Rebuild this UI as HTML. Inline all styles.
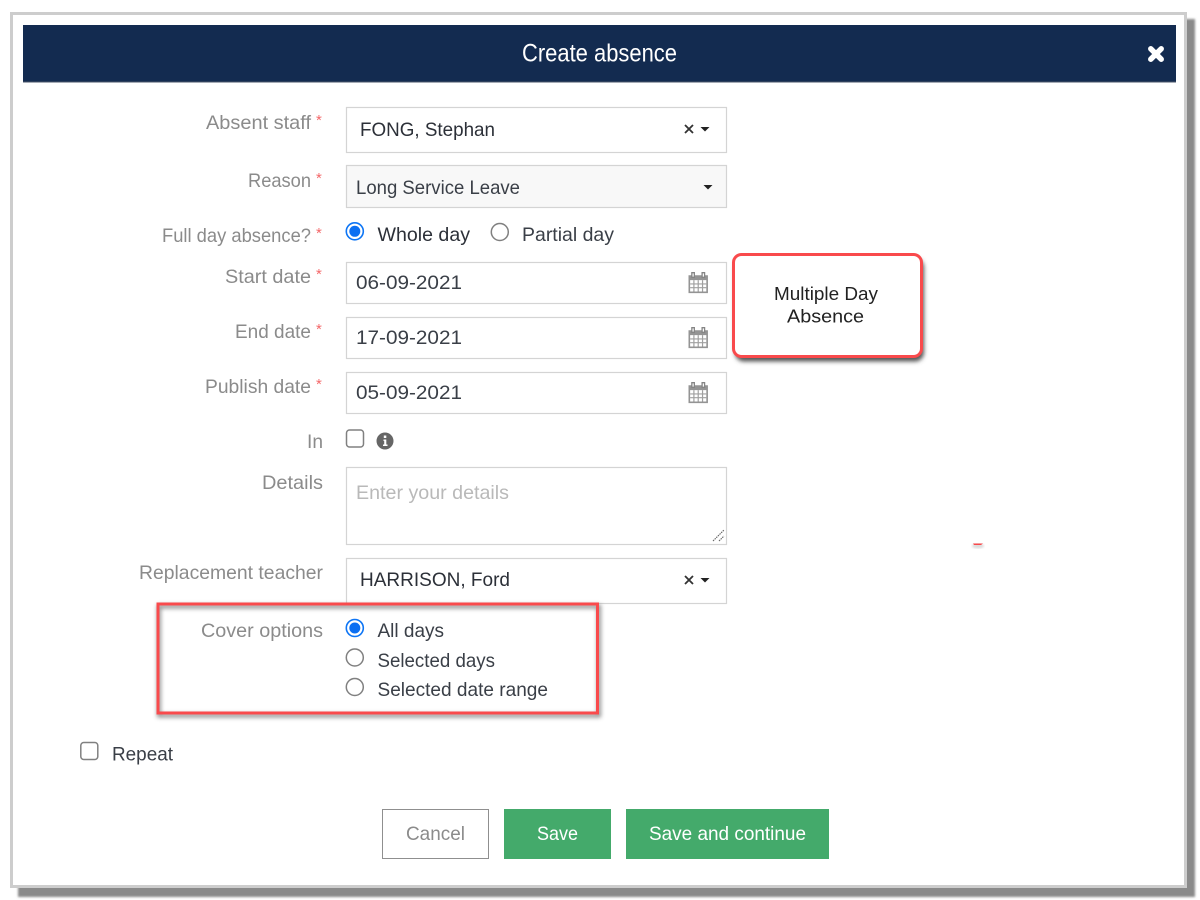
<!DOCTYPE html>
<html lang="en">
<head>
<meta charset="utf-8">
<title>Create absence</title>
<style>
html,body{margin:0;padding:0;background:#fff;width:1200px;height:900px;overflow:hidden}
svg{display:block;position:absolute;left:0;top:0}
text{font-family:"Liberation Sans",sans-serif;font-size:19.5px}
.l{fill:#8b8b8b}
.v{fill:#3a3f47}
.s{fill:#f4686a;font-size:15px}
.box{fill:#fff;stroke:#d4d4d4;stroke-width:1.2}
.rd{fill:#fff;stroke:#808080;stroke-width:1.5}
.cb{fill:#fff;stroke:#808080;stroke-width:1.5}
</style>
</head>
<body>
<svg width="1200" height="900" viewBox="0 0 1200 900" xmlns="http://www.w3.org/2000/svg">
<defs>
<filter id="b1" x="-5%" y="-5%" width="110%" height="110%"><feGaussianBlur stdDeviation="1"/></filter>
<filter id="b2" x="-20%" y="-20%" width="140%" height="140%"><feGaussianBlur stdDeviation="2"/></filter>
<g id="cal" transform="scale(1.08)">
<path d="M0 3.500h18v16.500h-18z" fill="#949494"/>
<path d="M1.500 8h15v10.500h-15z" fill="#fff"/>
<path d="M5 8v10.500M9 8v10.500M13 8v10.500M1.500 11.500h15M1.500 15h15" stroke="#a0a0a0" stroke-width="1.100" fill="none"/>
<path d="M2.500 .5h3.500v5.500h-3.500zM12 .5h3.500v5.500h-3.500z" fill="#858585"/>
<path d="M3.700 1.700h1.100v3h-1.100zM13.200 1.700h1.100v3h-1.100z" fill="#fff"/>
</g>
<path id="car" d="M0 0h9l-4.500 4.500z" fill="#222"/>
</defs>

<!-- frame -->
<rect x="18" y="19" width="1177" height="878" fill="#8a8a8a" filter="url(#b1)"/>
<rect x="11.500" y="13.500" width="1174" height="873" fill="#fff" stroke="#cdcdcd" stroke-width="3"/>

<!-- header -->
<rect x="23" y="25" width="1153" height="57" fill="#132b50"/>
<rect x="23" y="81.500" width="1153" height="1" fill="#4a5568"/>
<text x="522" y="61.500" textLength="155" lengthAdjust="spacingAndGlyphs" style="font-size:25px" fill="#fff">Create absence</text>
<path d="M1150.800 48.800L1161.200 59.200M1161.200 48.800L1150.800 59.200" stroke="#fff" stroke-width="5.500" stroke-linecap="round"/>

<!-- labels -->
<text class="l" x="206" y="129" textLength="105" lengthAdjust="spacingAndGlyphs">Absent staff</text><text class="s" x="316" y="125">*</text>
<text class="l" x="248" y="187" textLength="63" lengthAdjust="spacingAndGlyphs">Reason</text><text class="s" x="316" y="183">*</text>
<text class="l" x="162" y="242" textLength="149" lengthAdjust="spacingAndGlyphs">Full day absence?</text><text class="s" x="316" y="238">*</text>
<text class="l" x="225" y="283" textLength="86" lengthAdjust="spacingAndGlyphs">Start date</text><text class="s" x="316" y="279">*</text>
<text class="l" x="235" y="338" textLength="76" lengthAdjust="spacingAndGlyphs">End date</text><text class="s" x="316" y="334">*</text>
<text class="l" x="205" y="393" textLength="106" lengthAdjust="spacingAndGlyphs">Publish date</text><text class="s" x="316" y="389">*</text>
<text class="l" x="307" y="448" textLength="16" lengthAdjust="spacingAndGlyphs">In</text>
<text class="l" x="262" y="489" textLength="61" lengthAdjust="spacingAndGlyphs">Details</text>
<text class="l" x="139" y="579" textLength="184" lengthAdjust="spacingAndGlyphs">Replacement teacher</text>
<text class="l" x="201" y="637" textLength="122" lengthAdjust="spacingAndGlyphs">Cover options</text>

<!-- fields -->
<rect class="box" x="346.500" y="107.500" width="380" height="45"/>
<text x="360" y="136" textLength="135" lengthAdjust="spacingAndGlyphs" fill="#2c3038">FONG, Stephan</text>
<path d="M685 125L693 133M693 125L685 133" stroke="#333" stroke-width="1.800"/>
<use href="#car" x="700.500" y="127"/>

<rect class="box" x="346.500" y="165.500" width="380" height="42" style="fill:#f8f8f8"/>
<text class="v" x="356" y="194" textLength="164" lengthAdjust="spacingAndGlyphs">Long Service Leave</text>
<use href="#car" x="703.500" y="185"/>

<circle cx="354.800" cy="231.300" r="8.500" fill="#fff" stroke="#0d75f5" stroke-width="1.600"/>
<circle cx="354.800" cy="231.300" r="5.500" fill="#0b6ff2"/>
<text x="377.500" y="241" textLength="92.500" lengthAdjust="spacingAndGlyphs" fill="#2c3038">Whole day</text>
<circle class="rd" cx="499.800" cy="232" r="8.500"/>
<text class="v" x="522" y="241" textLength="92" lengthAdjust="spacingAndGlyphs">Partial day</text>

<rect class="box" x="346.500" y="262.500" width="380" height="41"/>
<text class="v" x="356" y="289" textLength="106" lengthAdjust="spacingAndGlyphs">06-09-2021</text>
<g transform="translate(688.500 271.500)"><use href="#cal"/></g>
<rect class="box" x="346.500" y="317.500" width="380" height="41"/>
<text class="v" x="356" y="344" textLength="106" lengthAdjust="spacingAndGlyphs">17-09-2021</text>
<g transform="translate(688.500 326.500)"><use href="#cal"/></g>
<rect class="box" x="346.500" y="372.500" width="380" height="41"/>
<text class="v" x="356" y="399" textLength="106" lengthAdjust="spacingAndGlyphs">05-09-2021</text>
<g transform="translate(688.500 381.500)"><use href="#cal"/></g>

<rect class="cb" x="346.500" y="430" width="17" height="17" rx="3"/>
<circle cx="385" cy="441" r="8.500" fill="#666"/>
<path d="M383.500 439.500h2.800v5h1.200v1.500h-4.500v-1.500h1.200v-3.500h-.7zM383.800 435.500h2.500v2.500h-2.500z" fill="#fff"/>

<rect class="box" x="346.500" y="467.500" width="380" height="77"/>
<text x="356" y="499" textLength="153" lengthAdjust="spacingAndGlyphs" fill="#b9b9b9">Enter your details</text>
<path d="M713 541L724 530M719 541L724 536" stroke="#666" stroke-width="1.100" stroke-dasharray="1.500 .8"/>

<rect class="box" x="346.500" y="558.500" width="380" height="45"/>
<text x="360" y="586" textLength="150" lengthAdjust="spacingAndGlyphs" fill="#2c3038">HARRISON, Ford</text>
<path d="M685 576L693 584M693 576L685 584" stroke="#333" stroke-width="1.800"/>
<use href="#car" x="700.500" y="578"/>

<!-- cover options -->
<circle cx="354.800" cy="628" r="8.500" fill="#fff" stroke="#0d75f5" stroke-width="1.600"/>
<circle cx="354.800" cy="628" r="5.500" fill="#0b6ff2"/>
<text class="v" x="377.500" y="637" textLength="66.500" lengthAdjust="spacingAndGlyphs">All days</text>
<circle class="rd" cx="354.800" cy="657.500" r="8.500"/>
<text class="v" x="377.500" y="667" textLength="117.500" lengthAdjust="spacingAndGlyphs">Selected days</text>
<circle class="rd" cx="354.800" cy="687" r="8.500"/>
<text class="v" x="377.500" y="696" textLength="170.500" lengthAdjust="spacingAndGlyphs">Selected date range</text>

<rect x="159" y="606.500" width="440" height="109" fill="none" stroke="#777" stroke-width="4" opacity=".8" filter="url(#b2)"/>
<rect x="158" y="604" width="439.500" height="109" fill="none" stroke="#f94a4c" stroke-width="3"/>

<!-- callout -->
<rect x="735" y="258.500" width="189" height="103" rx="9" fill="#555" filter="url(#b2)"/>
<rect x="733.500" y="254.500" width="188" height="102" rx="8" fill="#fff" stroke="#f94a4c" stroke-width="3"/>
<text x="774" y="300" textLength="104" lengthAdjust="spacingAndGlyphs" fill="#222" style="font-size:18px">Multiple Day</text>
<text x="787" y="322.500" textLength="77" lengthAdjust="spacingAndGlyphs" fill="#222" style="font-size:18px">Absence</text>

<!-- stray mark -->
<ellipse cx="978" cy="546" rx="6" ry="2.500" fill="#999" opacity=".35" filter="url(#b1)"/>
<path d="M973 543.500h10l-2 1.500h-7z" fill="#f94a4c"/>

<!-- repeat -->
<rect class="cb" x="80.800" y="742.500" width="17" height="17" rx="3"/>
<text class="v" x="112" y="760.500" textLength="61" lengthAdjust="spacingAndGlyphs">Repeat</text>

<!-- buttons -->
<rect x="382.500" y="809.500" width="106" height="49" fill="#fff" stroke="#8f8f8f"/>
<text x="406" y="840" textLength="59" lengthAdjust="spacingAndGlyphs" fill="#8b8b8b">Cancel</text>
<rect x="504" y="809" width="107" height="50" fill="#44aa6b"/>
<text x="537" y="840" textLength="41" lengthAdjust="spacingAndGlyphs" fill="#fff">Save</text>
<rect x="626" y="809" width="203" height="50" fill="#44aa6b"/>
<text x="649" y="840" textLength="157" lengthAdjust="spacingAndGlyphs" fill="#fff">Save and continue</text>
</svg>
</body>
</html>
